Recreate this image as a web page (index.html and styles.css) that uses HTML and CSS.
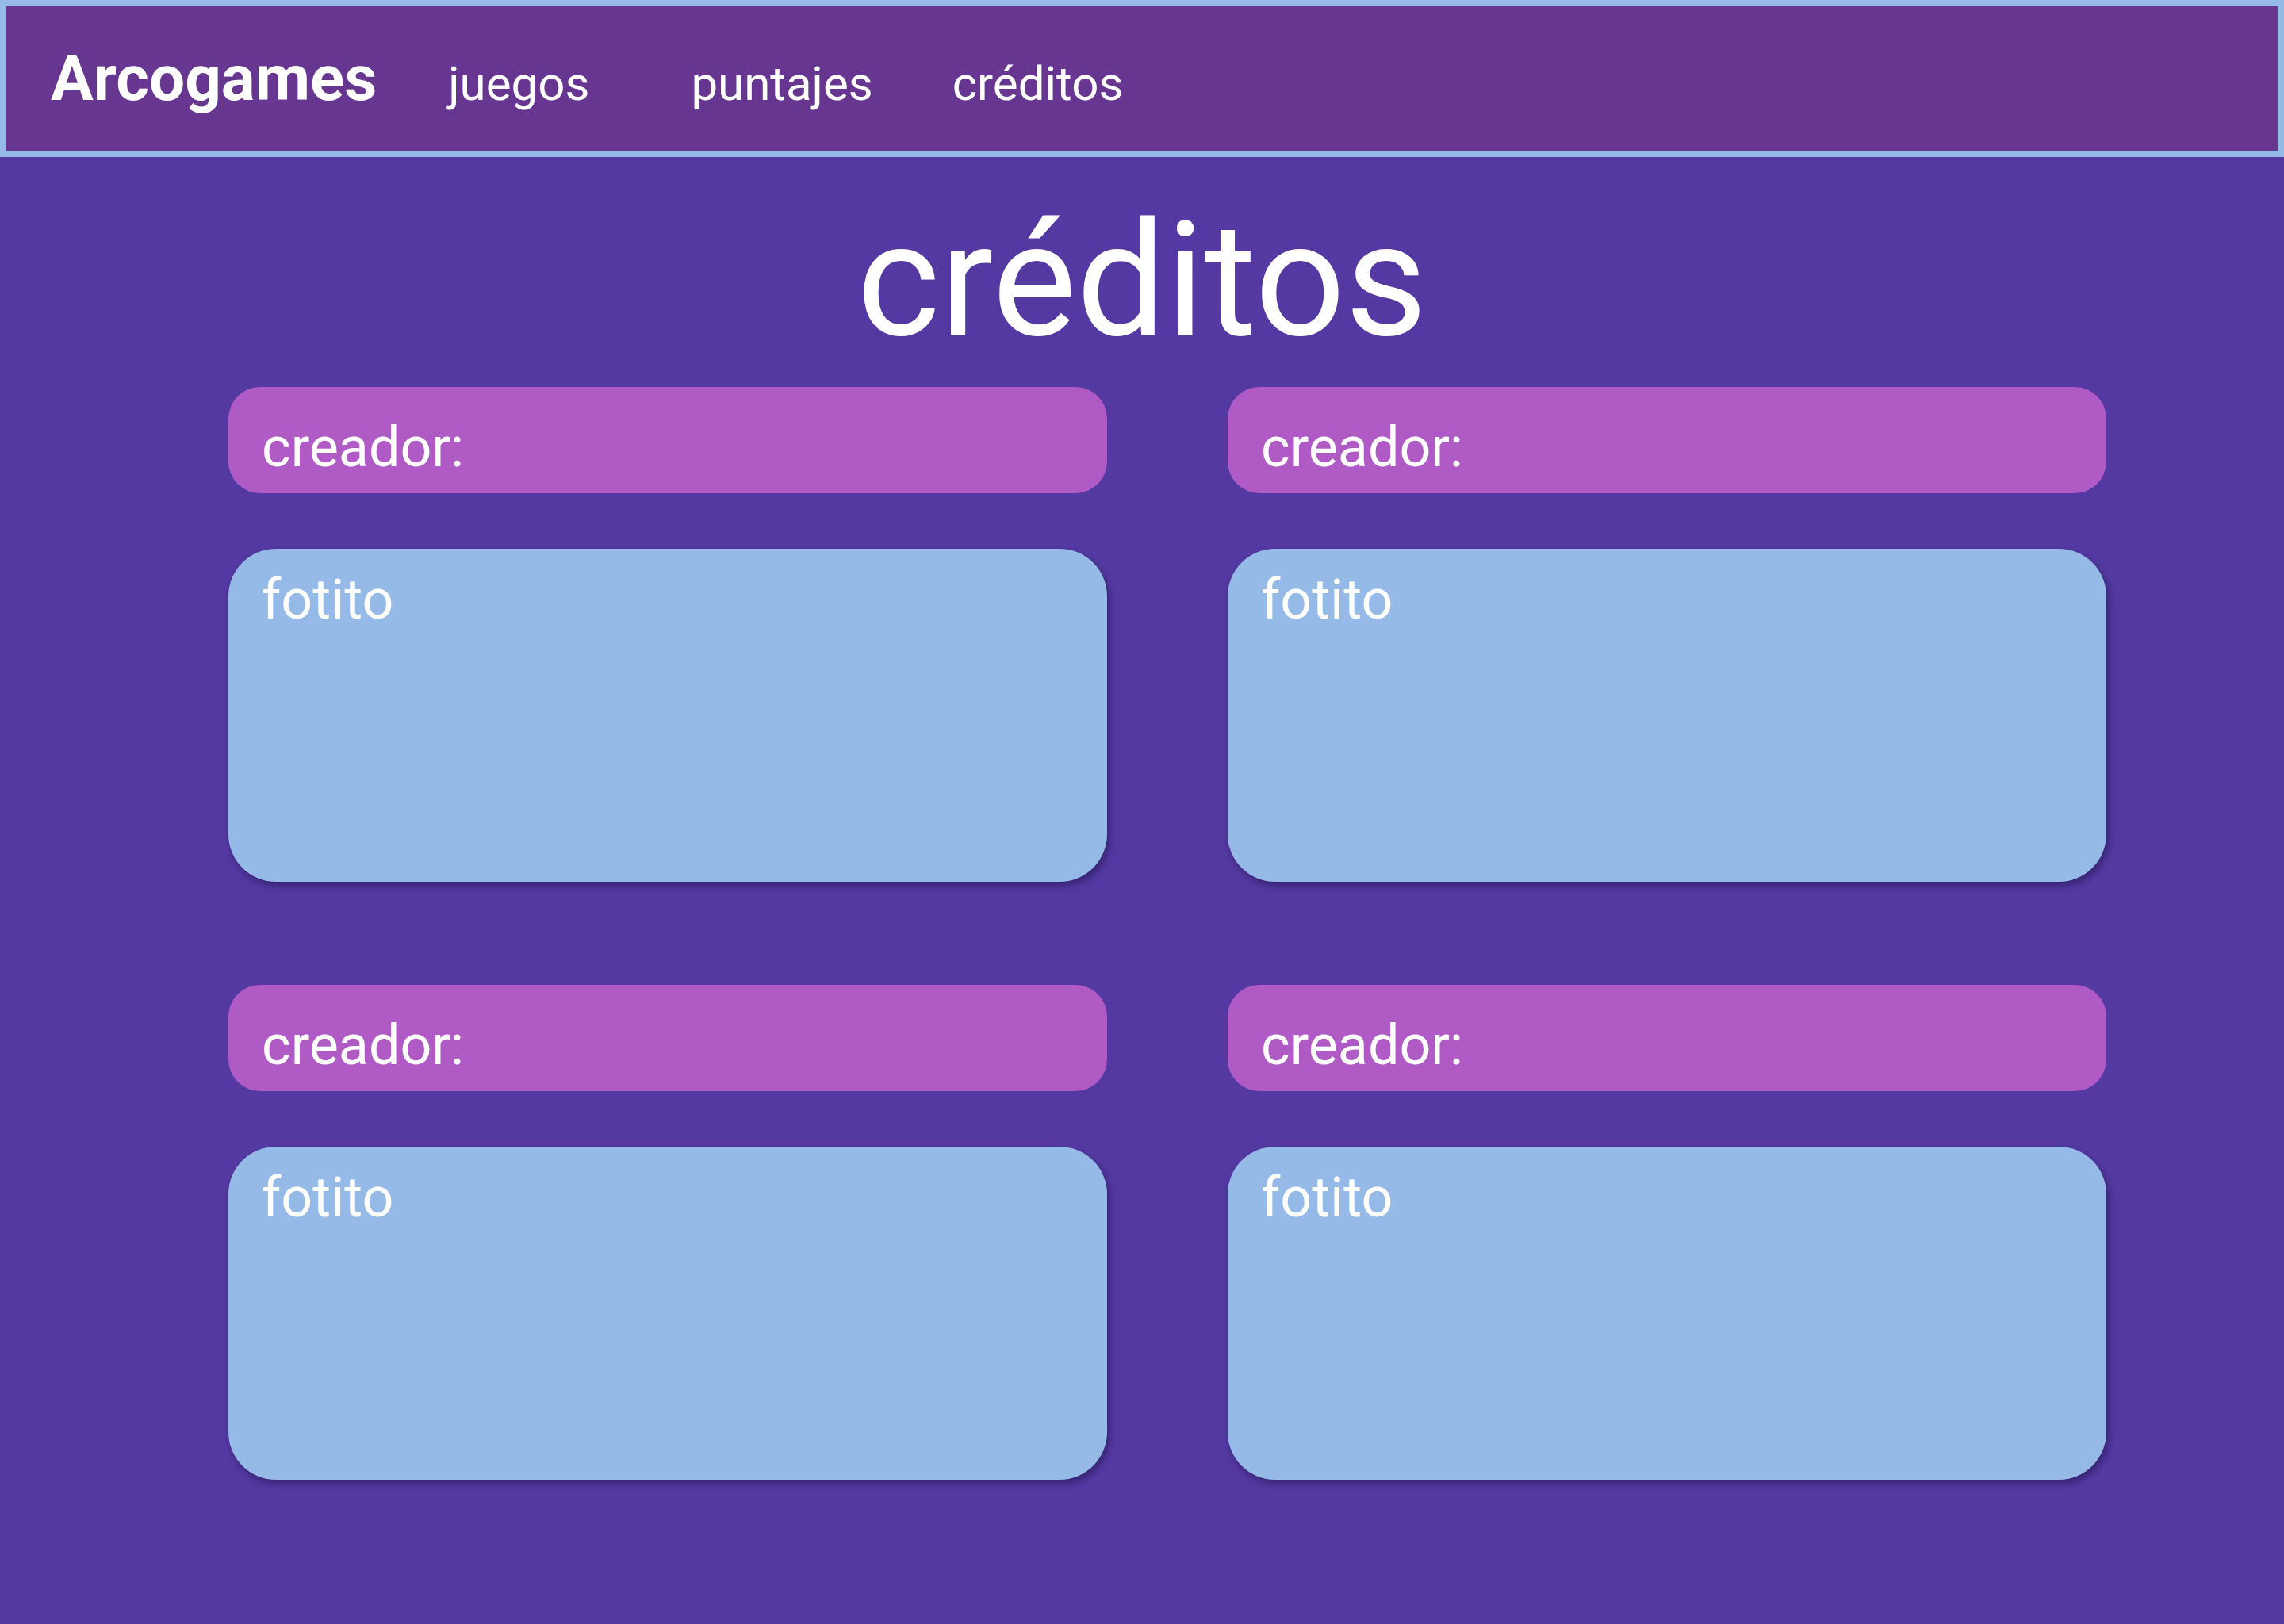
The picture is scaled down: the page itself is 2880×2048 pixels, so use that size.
FILE: index.html
```html
<!DOCTYPE html>
<html lang="es">
<head>
<meta charset="utf-8">
<title>Arcogames - créditos</title>
<link rel="stylesheet" href="styles.css">
</head>
<body>
<header class="topbar">
  <a class="brand" href="#">Arcogames</a>
  <nav class="nav">
    <a class="nav-link nav-juegos" href="#">juegos</a>
    <a class="nav-link nav-puntajes" href="#">puntajes</a>
    <a class="nav-link nav-creditos" href="#">créditos</a>
  </nav>
</header>
<main class="page">
  <h1 class="title">créditos</h1>
  <section class="grid">
    <div class="card">
      <div class="creator">creador:</div>
      <div class="photo">fotito</div>
    </div>
    <div class="card">
      <div class="creator">creador:</div>
      <div class="photo">fotito</div>
    </div>
    <div class="card">
      <div class="creator">creador:</div>
      <div class="photo">fotito</div>
    </div>
    <div class="card">
      <div class="creator">creador:</div>
      <div class="photo">fotito</div>
    </div>
  </section>
</main>
</body>
</html>
```
FILE: styles.css
```css
* { box-sizing: border-box; }

html, body {
  margin: 0;
  padding: 0;
}

body {
  background: #5339a1;
  font-family: Roboto, "Liberation Sans", sans-serif;
  color: #ffffff;
  min-height: 2048px;
}

.topbar {
  display: flex;
  align-items: baseline;
  height: 198px;
  padding: 44px 0 0 56px;
  background: #663691;
  border: 8px solid #96bae7;
}

.brand {
  font-size: 80px;
  font-weight: 700;
  color: #ffffff;
  text-decoration: none;
  line-height: normal;
}

.nav {
  display: flex;
  align-items: baseline;
}

.nav-link {
  font-size: 60px;
  font-weight: 400;
  color: #ffffff;
  text-decoration: none;
  line-height: normal;
}

.nav-juegos { margin-left: 90px; }
.nav-puntajes { margin-left: 128px; }
.nav-creditos { margin-left: 100px; }

.page {
  padding: 0;
}

.title {
  margin: 38px 0 0 0;
  font-size: 200px;
  font-weight: 400;
  line-height: normal;
  text-align: center;
}

.grid {
  display: grid;
  grid-template-columns: 1108px 1108px;
  column-gap: 152px;
  row-gap: 130px;
  margin: 17px 0 0 288px;
}

.card {
  display: flex;
  flex-direction: column;
  gap: 70px;
}

.creator {
  height: 134px;
  padding: 35px 0 0 42px;
  background: #b05ac6;
  border-radius: 40px;
  font-size: 70px;
  line-height: normal;
}

.photo {
  height: 420px;
  padding: 23px 0 0 42px;
  background: #96bae7;
  border-radius: 60px;
  font-size: 70px;
  line-height: normal;
  box-shadow: 3px 5px 8px rgba(20, 10, 60, 0.45);
}
```
